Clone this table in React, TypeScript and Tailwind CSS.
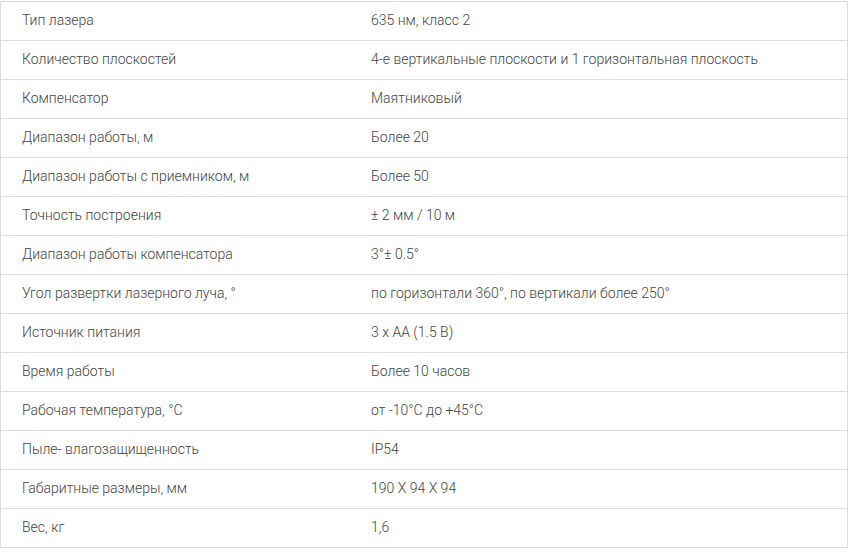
const rows: [string, string][] = [
  ["Тип лазера", "635 нм, класс 2"],
  ["Количество плоскостей", "4-е вертикальные плоскости и 1 горизонтальная плоскость"],
  ["Компенсатор", "Маятниковый"],
  ["Диапазон работы, м", "Более 20"],
  ["Диапазон работы с приемником, м", "Более 50"],
  ["Точность построения", "± 2 мм / 10 м"],
  ["Диапазон работы компенсатора", "3°± 0.5°"],
  ["Угол развертки лазерного луча, °", "по горизонтали 360°, по вертикали более 250°"],
  ["Источник питания", "3 х АА (1.5 В)"],
  ["Время работы", "Более 10 часов"],
  ["Рабочая температура, °С", "от -10°С до +45°С"],
  ["Пыле- влагозащищенность", "IP54"],
  ["Габаритные размеры, мм", "190 Х 94 Х 94"],
  ["Вес, кг", "1,6"],
];

export default function App() {
  return (
    <div className="bg-white w-[848px] h-[549px] pt-px" style={{ fontFamily: "Roboto, 'Liberation Sans', sans-serif" }}>
      <div className="border border-[#dcdcdc] border-b-0 text-[14px] font-light text-[#444]">
        {rows.map(([k, v], i) => (
          <div key={i} className="grid grid-cols-[349px_1fr] h-[39px] border-b border-[#dcdcdc] items-center pb-px">
            <div className="pl-[21px]">{k}</div>
            <div className="pl-[21px]">{v}</div>
          </div>
        ))}
      </div>
    </div>
  );
}
